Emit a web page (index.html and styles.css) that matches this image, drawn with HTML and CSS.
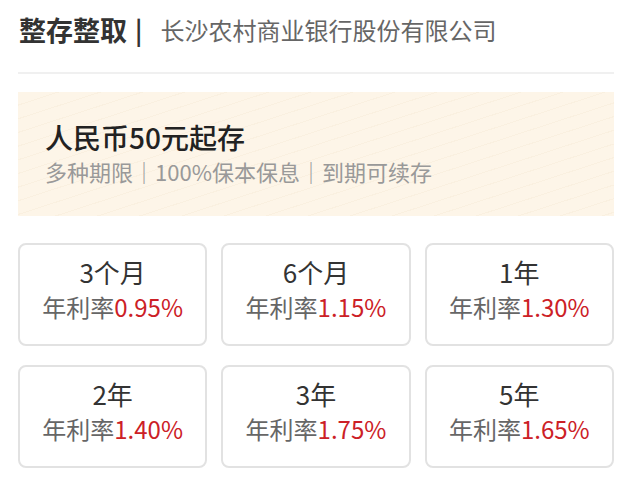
FILE: index.html
```html
<!DOCTYPE html>
<html lang="zh-CN">
<head>
<meta charset="utf-8">
<link rel="stylesheet" href="styles.css">
</head>
<body>
<div class="page">
  <header class="head">
    <span class="head-title">整存整取</span>
    <span class="head-sep">|</span>
    <span class="head-sub">长沙农村商业银行股份有限公司</span>
  </header>
  <div class="divider"></div>
  <section class="banner">
    <div class="banner-title">人民币50元起存</div>
    <div class="banner-sub">多种期限｜100%保本保息｜到期可续存</div>
  </section>
  <section class="grid">
    <div class="card"><div class="term">3个月</div><div class="rate">年利率<span class="pct">0.95%</span></div></div>
    <div class="card"><div class="term">6个月</div><div class="rate">年利率<span class="pct">1.15%</span></div></div>
    <div class="card"><div class="term">1年</div><div class="rate">年利率<span class="pct">1.30%</span></div></div>
    <div class="card"><div class="term">2年</div><div class="rate">年利率<span class="pct">1.40%</span></div></div>
    <div class="card"><div class="term">3年</div><div class="rate">年利率<span class="pct">1.75%</span></div></div>
    <div class="card"><div class="term">5年</div><div class="rate">年利率<span class="pct">1.65%</span></div></div>
  </section>
</div>
</body>
</html>
```
FILE: styles.css
```css
* { box-sizing: border-box; }
html, body { margin: 0; padding: 0; background: #fff; }
body { font-family: "Noto Sans CJK SC", "Noto Sans", sans-serif; color: #333; }
.page { padding: 0 18px; width: 632px; }
.head { display: flex; align-items: center; height: 58px; padding-left: 1px; }
.head-title { font-size: 27px; font-weight: 700; color: #333; }
.head-sep { font-size: 25px; font-weight: 700; color: #333; margin: 0 18px 0 8px; }
.head-sub { font-size: 24px; color: #666; }
.divider { height: 2px; background: #f0f0f0; margin-top: 14px; }
.banner {
  margin-top: 18px; height: 124px; padding: 27px 0 0 27px;
  background: #fdf5e8;
  background-image: repeating-linear-gradient(162deg, rgba(255,255,255,0) 0 12px, rgba(240,225,200,0.25) 12px 13px);
}
.banner-title { font-size: 28px; font-weight: 500; color: #222; line-height: 36px; }
.banner-sub { font-size: 22px; color: #999; line-height: 30px; margin-top: 1px; }
.grid { display: grid; grid-template-columns: repeat(3, 1fr); column-gap: 14px; row-gap: 19px; margin-top: 27px; width: 596px; }
.card { border: 2px solid #e2e2e2; border-radius: 8px; height: 103px; display: flex; flex-direction: column; align-items: center; padding-top: 10px; }
.term { font-size: 26px; color: #333; line-height: 34px; }
.rate { font-size: 24px; color: #666; line-height: 36px; }
.pct { color: #cc2026; }
```
